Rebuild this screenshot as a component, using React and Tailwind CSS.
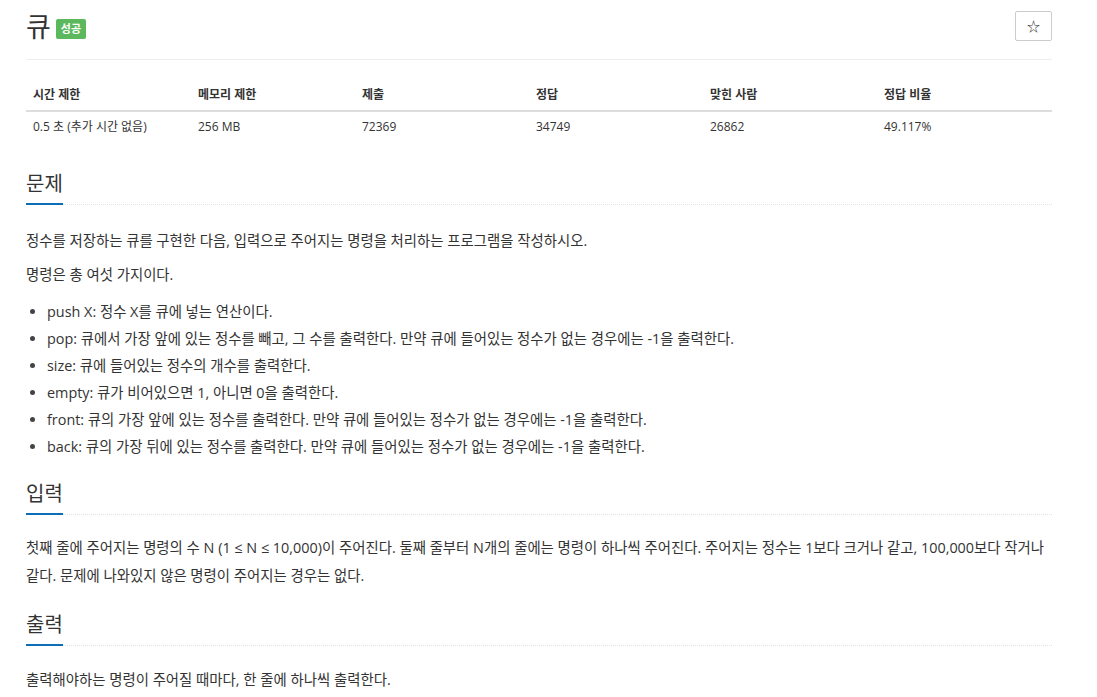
const font = { fontFamily: '"Open Sans", "Noto Sans CJK KR", sans-serif' };

const stats = [
  { label: '시간 제한', value: '0.5 초 (추가 시간 없음)', w: 'w-[165px]' },
  { label: '메모리 제한', value: '256 MB', w: 'w-[164px]' },
  { label: '제출', value: '72369', w: 'w-[174px]' },
  { label: '정답', value: '34749', w: 'w-[174px]' },
  { label: '맞힌 사람', value: '26862', w: 'w-[174px]' },
  { label: '정답 비율', value: '49.117%', w: '' },
];

const commands = [
  ['push X', ': 정수 X를 큐에 넣는 연산이다.'],
  ['pop', ': 큐에서 가장 앞에 있는 정수를 빼고, 그 수를 출력한다. 만약 큐에 들어있는 정수가 없는 경우에는 -1을 출력한다.'],
  ['size', ': 큐에 들어있는 정수의 개수를 출력한다.'],
  ['empty', ': 큐가 비어있으면 1, 아니면 0을 출력한다.'],
  ['front', ': 큐의 가장 앞에 있는 정수를 출력한다. 만약 큐에 들어있는 정수가 없는 경우에는 -1을 출력한다.'],
  ['back', ': 큐의 가장 뒤에 있는 정수를 출력한다. 만약 큐에 들어있는 정수가 없는 경우에는 -1을 출력한다.'],
];

function SectionTitle({ children, className = '' }) {
  return (
    <div className={`border-b border-dotted border-[#e3e3e3] ${className}`}>
      <h2 className="inline-block text-[20px] leading-[30px] font-normal text-[#333] pb-[4px] border-b-2 border-[#0e6db7] -mb-px">
        {children}
      </h2>
    </div>
  );
}

export default function App() {
  return (
    <div className="bg-white min-h-screen text-[#333]" style={font}>
      <div className="w-[1026px] ml-[26px]">
        <div className="h-[60px] border-b border-[#eee] flex justify-between items-start">
          <div className="flex items-center pt-[12px]">
            <h1 className="text-[27px] leading-[30px] font-normal text-[#333]">큐</h1>
            <span className="ml-[5px] mt-[4px] bg-[#5cb85c] text-white text-[11px] font-bold leading-[20px] px-[5px] rounded-[2px]">
              성공
            </span>
          </div>
          <button className="mt-[11px] w-[37px] h-[30px] border border-[#ccc] rounded-[2px] bg-white flex items-center justify-center text-[13px] text-[#333] leading-none">
            ☆
          </button>
        </div>

        <table className="mt-[19px] w-full text-[12px] border-collapse">
          <thead>
            <tr className="border-b-2 border-[#ddd]">
              {stats.map((s) => (
                <th key={s.label} className={`${s.w} h-[32px] px-[7px] text-left font-bold align-middle`}>
                  {s.label}
                </th>
              ))}
            </tr>
          </thead>
          <tbody>
            <tr>
              {stats.map((s) => (
                <td key={s.label} className="h-[30px] px-[7px] align-middle">
                  {s.value}
                </td>
              ))}
            </tr>
          </tbody>
        </table>

        <SectionTitle className="mt-[28px]">문제</SectionTitle>
        <div className="text-[14.4px] text-[#333]">
          <p className="mt-[24px] leading-[24px]">정수를 저장하는 큐를 구현한 다음, 입력으로 주어지는 명령을 처리하는 프로그램을 작성하시오.</p>
          <p className="mt-[10px] leading-[24px]">명령은 총 여섯 가지이다.</p>
          <ul className="mt-[13px] list-disc pl-[21px]">
            {commands.map(([cmd, desc]) => (
              <li key={cmd} className="leading-[24px] mb-[3px] marker:text-[#444]">
                {cmd}
                {desc}
              </li>
            ))}
          </ul>
        </div>

        <SectionTitle className="mt-[20px]">입력</SectionTitle>
        <p className="mt-[19px] text-[14.4px] leading-[28px]">
          첫째 줄에 주어지는 명령의 수 N (1 ≤ N ≤ 10,000)이 주어진다. 둘째 줄부터 N개의 줄에는 명령이 하나씩 주어진다. 주어지는 정수는 1보다 크거나 같고, 100,000보다 작거나
          <br />
          같다. 문제에 나와있지 않은 명령이 주어지는 경우는 없다.
        </p>

        <SectionTitle className="mt-[20px]">출력</SectionTitle>
        <p className="mt-[20px] text-[14.4px] leading-[28px]">출력해야하는 명령이 주어질 때마다, 한 줄에 하나씩 출력한다.</p>
      </div>
    </div>
  );
}
